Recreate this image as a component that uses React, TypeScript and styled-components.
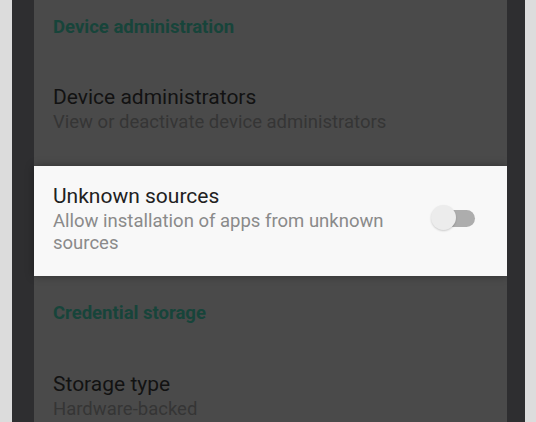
import styled, { createGlobalStyle } from 'styled-components'

const GlobalStyle = createGlobalStyle`
  html, body {
    margin: 0;
    padding: 0;
    background: #dedede;
  }

  body {
    font-family: Roboto, 'Noto Sans', 'Liberation Sans', sans-serif;
  }
`

const Device = styled.div`
  display: flex;
  height: 422px;
  overflow: hidden;
  width: 536px;
`

const Edge = styled.div<{ $width: number }>`
  background: #dcdcdc;
  flex: 0 0 ${({ $width }) => $width}px;
`

const Bezel = styled.div<{ $width: number }>`
  background: #2e2e30;
  flex: 0 0 ${({ $width }) => $width}px;
`

const Screen = styled.div`
  background: #4a4a4a;
  display: flex;
  flex: 1;
  flex-direction: column;
`

const Category = styled.div<{ $top: number }>`
  color: #17443a;
  font-size: 18.5px;
  font-weight: 700;
  line-height: 20px;
  padding: ${({ $top }) => $top}px 19px 0;
`

const Pref = styled.div<{ $top: number }>`
  display: flex;
  flex-direction: column;
  padding: ${({ $top }) => $top}px 19px 0;
`

const Title = styled.div<{ $light?: boolean }>`
  color: ${({ $light }) => ($light ? '#212121' : '#121212')};
  font-size: 21px;
  line-height: 26px;
`

const Summary = styled.div<{ $light?: boolean }>`
  color: ${({ $light }) => ($light ? '#8a8a8a' : '#353535')};
  font-size: 18.5px;
  line-height: 22px;
  padding-top: 1px;
`

const Highlight = styled.div`
  align-items: flex-start;
  background: #f8f8f8;
  box-shadow: 0 0 8px rgba(0, 0, 0, 0.35);
  box-sizing: border-box;
  display: flex;
  height: 110px;
  margin-top: 33px;
  padding: 17px 32px 0 19px;
`

const HighlightText = styled.div`
  display: flex;
  flex: 1;
  flex-direction: column;
`

const Toggle = styled.div`
  align-items: center;
  display: flex;
  height: 26px;
  margin-top: 22px;
  position: relative;
  width: 44px;
`

const Track = styled.div`
  background: #adadad;
  border-radius: 9px;
  height: 17px;
  margin-left: 8px;
  width: 36px;
`

const Thumb = styled.div`
  background: #ececec;
  border-radius: 50%;
  box-shadow: 0 1px 2px rgba(0, 0, 0, 0.18);
  height: 25px;
  left: 0;
  position: absolute;
  top: 0;
  width: 25px;
`

export default function App() {
  return (
    <>
      <GlobalStyle />
      <Device>
        <Edge $width={12} />
        <Bezel $width={22} />
        <Screen>
          <Category $top={17}>Device administration</Category>
          <Pref $top={47}>
            <Title>Device administrators</Title>
            <Summary>View or deactivate device administrators</Summary>
          </Pref>
          <Highlight>
            <HighlightText>
              <Title $light>Unknown sources</Title>
              <Summary $light>
                Allow installation of apps from unknown
                <br />
                sources
              </Summary>
            </HighlightText>
            <Toggle>
              <Track />
              <Thumb />
            </Toggle>
          </Highlight>
          <Category $top={27}>Credential storage</Category>
          <Pref $top={48}>
            <Title>Storage type</Title>
            <Summary>Hardware-backed</Summary>
          </Pref>
        </Screen>
        <Bezel $width={18} />
        <Edge $width={11} />
      </Device>
    </>
  )
}
